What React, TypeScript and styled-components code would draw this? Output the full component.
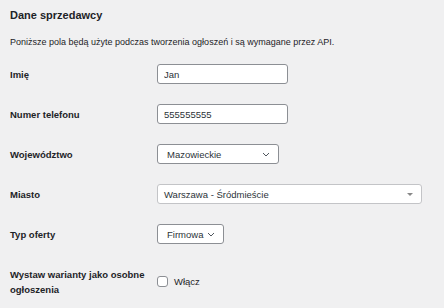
import styled, { createGlobalStyle } from 'styled-components';

const GlobalStyle = createGlobalStyle`
  body {
    margin: 0;
    background: #f0f0f1;
    color: #1d2327;
    font-family: "Liberation Sans", Arial, sans-serif;
  }
`;

const Page = styled.div`
  padding: 8px 10px 0;
`;

const Title = styled.h2`
  margin: 0;
  font-size: 11px;
  line-height: 14px;
  font-weight: 700;
`;

const Description = styled.p`
  margin: 13px 0 5px;
  font-size: 9px;
  line-height: 14px;
`;

const Row = styled.div<{ $tall?: boolean }>`
  display: grid;
  grid-template-columns: 147px 1fr;
  align-items: ${(p) => (p.$tall ? 'start' : 'center')};
  padding: ${(p) => (p.$tall ? '13px 0 10px' : '10px 0')};
  min-height: 20px;
`;

const Label = styled.label`
  font-size: 9.5px;
  line-height: 15px;
  font-weight: 700;
`;

const TextInput = styled.input`
  box-sizing: border-box;
  width: 131px;
  height: 20px;
  padding: 0 6px;
  border: 1px solid #8c8f94;
  border-radius: 3px;
  background: #fff;
  color: #2c3338;
  font: 9.5px "Liberation Sans", Arial, sans-serif;
  outline: none;
`;

const SelectBox = styled.div<{ $width: number }>`
  box-sizing: border-box;
  width: ${(p) => p.$width}px;
  height: 20px;
  padding: 0 8px 0 9px;
  display: flex;
  align-items: center;
  justify-content: space-between;
  border: 1px solid #8c8f94;
  border-radius: 3px;
  background: #fff;
  color: #2c3338;
  font-size: 9.5px;
`;

const ComboBox = styled.div`
  box-sizing: border-box;
  width: 265px;
  height: 20px;
  padding: 0 8px 0 6px;
  display: flex;
  align-items: center;
  justify-content: space-between;
  border: 1px solid #c3c4c7;
  border-radius: 3px;
  background: #fff;
  color: #2c3338;
  font-size: 9.5px;
`;

const Caret = styled.span`
  width: 0;
  height: 0;
  border-left: 3px solid transparent;
  border-right: 3px solid transparent;
  border-top: 3px solid #888;
`;

const CheckRow = styled.div`
  display: flex;
  align-items: center;
  gap: 6px;
  margin-top: 9px;
  font-size: 9.5px;
  line-height: 11px;
`;

const Checkbox = styled.span`
  box-sizing: border-box;
  width: 11px;
  height: 11px;
  border: 1px solid #8c8f94;
  border-radius: 3px;
  background: #fff;
`;

const Chevron = () => (
  <svg width="8" height="5" viewBox="0 0 8 5" fill="none">
    <path d="M1 1l3 3 3-3" stroke="#50575e" strokeWidth="1" />
  </svg>
);

export default function App() {
  return (
    <>
      <GlobalStyle />
      <Page>
        <Title>Dane sprzedawcy</Title>
        <Description>
          Poniższe pola będą użyte podczas tworzenia ogłoszeń i są wymagane przez API.
        </Description>
        <Row>
          <Label>Imię</Label>
          <TextInput defaultValue="Jan" />
        </Row>
        <Row>
          <Label>Numer telefonu</Label>
          <TextInput defaultValue="555555555" />
        </Row>
        <Row>
          <Label>Województwo</Label>
          <SelectBox $width={122}>
            Mazowieckie
            <Chevron />
          </SelectBox>
        </Row>
        <Row>
          <Label>Miasto</Label>
          <ComboBox>
            Warszawa - Śródmieście
            <Caret />
          </ComboBox>
        </Row>
        <Row>
          <Label>Typ oferty</Label>
          <SelectBox $width={67}>
            Firmowa
            <Chevron />
          </SelectBox>
        </Row>
        <Row $tall>
          <Label>
            Wystaw warianty jako osobne
            <br />
            ogłoszenia
          </Label>
          <CheckRow>
            <Checkbox />
            Włącz
          </CheckRow>
        </Row>
      </Page>
    </>
  );
}
